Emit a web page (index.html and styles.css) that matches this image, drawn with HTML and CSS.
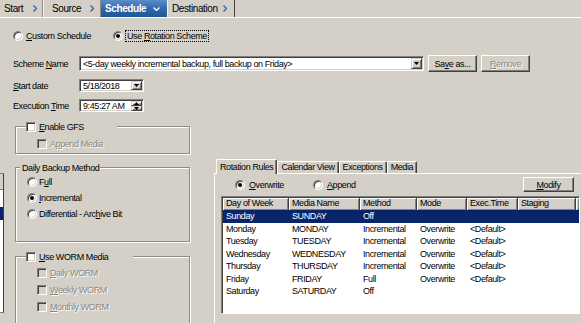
FILE: index.html
```html
<!DOCTYPE html>
<html lang="en">
<head>
    <meta charset="UTF-8">
    <title>Backup Job - Schedule</title>
    <link rel="stylesheet" href="styles.css">
</head>
<body>
<div class="wizard">
    <nav class="steps">
        <div class="step step-start">Start <svg class="chev" viewBox="0 0 4 7"><polyline points="0.5,0.5 3.5,3.5 0.5,6.5"/></svg></div>
        <div class="step step-source">Source <svg class="chev" viewBox="0 0 4 7"><polyline points="0.5,0.5 3.5,3.5 0.5,6.5"/></svg></div>
        <div class="step step-schedule active">Schedule <svg class="chev-down" viewBox="0 0 7 4"><polyline points="0.5,0.5 3.5,3.5 6.5,0.5"/></svg></div>
        <div class="step step-dest">Destination <svg class="chev" viewBox="0 0 4 7"><polyline points="0.5,0.5 3.5,3.5 0.5,6.5"/></svg></div>
    </nav>

    <div class="page">
        <div class="scheme-type">
            <div class="option type-custom"><span class="radio"></span><span><u>C</u>ustom Schedule</span></div>
            <div class="option"><span class="radio on"></span><span class="focus">Use <u>R</u>otation Scheme</span></div>
        </div>

        <div class="form-row scheme-row">
            <span class="form-label">Scheme <u>N</u>ame</span>
            <div class="field combo">
                <span class="field-text">&lt;5-day weekly incremental backup, full backup on Friday&gt;</span>
                <span class="drop-btn"><svg viewBox="0 0 5 3"><polygon points="0,0 5,0 2.5,3"/></svg></span>
            </div>
            <button class="btn">Sa<u>v</u>e as...</button>
            <button class="btn" disabled><u>R</u>emove</button>
        </div>

        <div class="form-row">
            <span class="form-label"><u>S</u>tart date</span>
            <div class="field small">
                <span class="field-text">5/18/2018</span>
                <span class="drop-btn"><svg viewBox="0 0 5 3"><polygon points="0,0 5,0 2.5,3"/></svg></span>
            </div>
        </div>

        <div class="form-row">
            <span class="form-label">Execution <u>T</u>ime</span>
            <div class="field small">
                <span class="field-text">9:45:27 AM</span>
                <span class="spin">
                    <span class="spin-btn"><svg viewBox="0 0 5 3"><polygon points="0,3 5,3 2.5,0"/></svg></span>
                    <span class="spin-btn"><svg viewBox="0 0 5 3"><polygon points="0,0 5,0 2.5,3"/></svg></span>
                </span>
            </div>
        </div>

        <div class="lower">
            <div class="side-list">
                <div class="side-head"></div>
                <div class="side-row"></div>
            </div>

            <div class="options">
                <div class="group">
                    <div class="group-title title-gfs"><span class="check"></span><span><u>E</u>nable GFS</span></div>
                    <div class="group-body gfs-body">
                        <div class="option disabled"><span class="check"></span><span>A<u>p</u>pend Media</span></div>
                    </div>
                </div>

                <div class="group daily">
                    <div class="group-title title-daily">Daily Backup Method</div>
                    <div class="group-body daily-body">
                        <div class="option"><span class="radio"></span><span>F<u>u</u>ll</span></div>
                        <div class="option"><span class="radio on"></span><span><u>I</u>ncremental</span></div>
                        <div class="option"><span class="radio"></span><span>Differential - Arc<u>h</u>ive Bit</span></div>
                    </div>
                </div>

                <div class="group worm">
                    <div class="group-title title-worm"><span class="check"></span><span><u>U</u>se WORM Media</span></div>
                    <div class="group-body worm-body">
                        <div class="option disabled"><span class="check"></span><span><u>D</u>aily WORM</span></div>
                        <div class="option disabled"><span class="check"></span><span><u>W</u>eekly WORM</span></div>
                        <div class="option disabled"><span class="check"></span><span><u>M</u>onthly WORM</span></div>
                    </div>
                </div>
            </div>

            <div class="rules">
                <div class="tabs">
                    <div class="tab active">Rotation Rules</div>
                    <div class="tab">Calendar View</div>
                    <div class="tab">Exceptions</div>
                    <div class="tab">Media</div>
                </div>
                <div class="tab-panel">
                    <div class="panel-bar">
                        <div class="option choice"><span class="radio on"></span><span><u>O</u>verwrite</span></div>
                        <div class="option"><span class="radio"></span><span><u>A</u>ppend</span></div>
                        <button class="btn modify"><u>M</u>odify</button>
                    </div>
                    <div class="list">
                        <div class="list-head">
                            <span>Day of Week</span>
                            <span>Media Name</span>
                            <span>Method</span>
                            <span>Mode</span>
                            <span>Exec.Time</span>
                            <span>Staging</span>
                            <span></span>
                        </div>
                        <div class="list-row selected"><span>Sunday</span><span>SUNDAY</span><span>Off</span><span></span><span></span><span></span></div>
                        <div class="list-row"><span>Monday</span><span>MONDAY</span><span>Incremental</span><span>Overwrite</span><span>&lt;Default&gt;</span><span></span></div>
                        <div class="list-row"><span>Tuesday</span><span>TUESDAY</span><span>Incremental</span><span>Overwrite</span><span>&lt;Default&gt;</span><span></span></div>
                        <div class="list-row"><span>Wednesday</span><span>WEDNESDAY</span><span>Incremental</span><span>Overwrite</span><span>&lt;Default&gt;</span><span></span></div>
                        <div class="list-row"><span>Thursday</span><span>THURSDAY</span><span>Incremental</span><span>Overwrite</span><span>&lt;Default&gt;</span><span></span></div>
                        <div class="list-row"><span>Friday</span><span>FRIDAY</span><span>Full</span><span>Overwrite</span><span>&lt;Default&gt;</span><span></span></div>
                        <div class="list-row"><span>Saturday</span><span>SATURDAY</span><span>Off</span><span></span><span></span><span></span></div>
                    </div>
                </div>
            </div>
        </div>
    </div>
</div>
</body>
</html>
```

FILE: styles.css
```css
* {
    margin: 0;
    padding: 0;
    box-sizing: border-box;
}

body {
    background: #d4d0c8;
    font-family: "Liberation Sans", Arial, sans-serif;
    font-size: 9px;
    letter-spacing: -0.4px;
    color: #000;
    overflow: hidden;
}

.wizard {
    width: 581px;
    height: 323px;
    overflow: hidden;
}

/* wizard step bar */
.steps {
    display: flex;
    height: 18px;
    border-bottom: 1px solid #fff;
}

.step {
    display: flex;
    align-items: center;
    justify-content: space-between;
    font-size: 10px;
    border-right: 1px solid #8e8b84;
    box-shadow: inset 1px 0 #f4f3f0;
}

.step-start { width: 43px; padding: 0 5px 0 4px; box-shadow: none; }
.step-source { width: 58px; padding: 0 6px 0 9px; }
.step-schedule { width: 66px; padding: 0 7px 0 4px; }
.step-dest { width: 68px; padding: 0 7px 0 5px; border-right-color: #404040; }

.step.active {
    background: linear-gradient(#5b8dcc, #2d67aa 55%, #1e5797);
    color: #fff;
    font-weight: bold;
    border-right: none;
    box-shadow: none;
}

.chev {
    width: 4px;
    height: 7px;
    fill: none;
    stroke: #35659d;
    stroke-width: 1.3;
}

.chev-down {
    width: 7px;
    height: 4px;
    fill: none;
    stroke: #fff;
    stroke-width: 1.3;
}

.page {
    padding-left: 13px;
}

/* common controls */
.option {
    display: flex;
    align-items: center;
    gap: 3px;
    height: 10px;
    white-space: nowrap;
}

.radio {
    flex: none;
    display: flex;
    align-items: center;
    justify-content: center;
    width: 10px;
    height: 10px;
    border-radius: 50%;
    background: #fff;
    border: 1px solid;
    border-color: #808080 #fff #fff #808080;
    box-shadow: inset 1px 1px #404040, inset -1px -1px #d4d0c8;
}

.radio.on::after {
    content: "";
    width: 4px;
    height: 4px;
    border-radius: 50%;
    background: #000;
}

.check {
    flex: none;
    width: 10px;
    height: 10px;
    background: #fff;
    border: 1px solid;
    border-color: #808080 #fff #fff #808080;
    box-shadow: inset 1px 1px #404040, inset -1px -1px #d4d0c8;
}

.disabled {
    color: #8a8780;
    text-shadow: 1px 1px #fff;
}

.disabled .check {
    background: #d4d0c8;
}

.btn {
    font: inherit;
    letter-spacing: inherit;
    color: #000;
    width: 49px;
    height: 17px;
    background: #d4d0c8;
    border: 1px solid;
    border-color: #fff #404040 #404040 #fff;
    box-shadow: inset -1px -1px #808080;
}

.btn:disabled {
    color: #8a8780;
    text-shadow: 1px 1px #fff;
}

.field {
    display: flex;
    align-items: stretch;
    background: #fff;
    border: 1px solid;
    border-color: #808080 #fff #fff #808080;
    box-shadow: inset 1px 1px #404040, inset -1px -1px #d4d0c8;
    padding: 1px 1px 1px 3px;
}

.field-text {
    display: flex;
    align-items: center;
    white-space: nowrap;
}

.drop-btn,
.spin-btn {
    display: flex;
    align-items: center;
    justify-content: center;
    background: #d4d0c8;
    border: 1px solid;
    border-color: #d4d0c8 #404040 #404040 #d4d0c8;
    box-shadow: inset 1px 1px #fff, inset -1px -1px #808080;
}

.drop-btn {
    margin-left: auto;
    width: 11px;
}

.drop-btn svg,
.spin-btn svg {
    width: 5px;
    height: 3px;
}

.spin {
    margin-left: auto;
    width: 11px;
    display: flex;
    flex-direction: column;
}

.spin-btn {
    flex: 1;
}

/* top form */
.scheme-type {
    display: flex;
    margin-top: 12px;
    height: 11px;
    align-items: center;
}

.type-custom {
    width: 100px;
}

.focus {
    outline: 1px dotted #000;
    padding: 0 1px;
    line-height: 10px;
}

.form-row {
    display: flex;
    align-items: center;
    margin-top: 7px;
}

.scheme-row {
    margin-top: 14px;
    height: 17px;
}

.form-label {
    width: 66px;
    white-space: nowrap;
}

.combo {
    width: 345px;
    height: 15px;
    margin-right: 4px;
}

.scheme-row .btn + .btn {
    margin-left: 4px;
}

.small {
    width: 65px;
    height: 13px;
}

/* lower area */
.lower {
    display: flex;
    align-items: flex-start;
    margin: 8px 0 0 -13px;
}

.side-list {
    width: 4px;
    height: 140px;
    margin-top: 53px;
    background: #fff;
    border: 1px solid #808080;
    border-left: none;
    border-right-color: #404040;
}

.side-head {
    height: 16px;
    background: #d4d0c8;
    border-bottom: 1px solid #808080;
}

.side-row {
    height: 13px;
    margin-top: 17px;
    background: #0a246a;
}

.options {
    width: 179px;
    margin-left: 11px;
}

.group {
    margin-top: 6px;
    border: 1px solid #8e8b84;
    box-shadow: 1px 1px #fff, inset 1px 1px #fff;
}

.group.daily { margin-top: 13px; }
.group.worm { margin-top: 14px; height: 80px; }

.group-title {
    display: flex;
    align-items: center;
    gap: 3px;
    height: 11px;
    margin-top: -6px;
    background: #d4d0c8;
    white-space: nowrap;
}

.title-gfs { margin-left: 10px; width: 91px; }
.title-daily { margin-left: 4px; width: 80px; padding-left: 2px; }
.title-worm { margin-left: 10px; width: 107px; }

.gfs-body {
    padding: 7px 0 4px 21px;
}

.daily-body {
    padding: 4px 0 22px 11px;
    display: flex;
    flex-direction: column;
    gap: 6px;
}

.daily-body .option { gap: 2px; }

.worm-body {
    padding: 6px 0 0 21px;
    display: flex;
    flex-direction: column;
    gap: 7px;
}

/* rotation rules tab control */
.rules {
    width: 369px;
    margin: 39px 0 0 24px;
}

.tabs {
    display: flex;
    align-items: flex-end;
    height: 14px;
    padding-left: 2px;
}

.tab {
    height: 12px;
    padding: 0 3px;
    line-height: 11px;
    white-space: nowrap;
    border: 1px solid;
    border-color: #fff #404040 transparent #fff;
    border-bottom: none;
    border-radius: 2px 2px 0 0;
    box-shadow: inset -1px 0 #808080;
}

.tab.active {
    height: 15px;
    line-height: 14px;
    margin-bottom: -1px;
    position: relative;
    background: #d4d0c8;
    padding: 0 3px;
}

.tab-panel {
    height: 160px;
    border-top: 1px solid #fff;
    border-left: 1px solid #fff;
    padding: 3px 7px 0 6px;
}

.panel-bar {
    display: flex;
    align-items: center;
    height: 15px;
}

.panel-bar .option {
    gap: 4px;
}

.panel-bar .choice {
    margin-left: 14px;
    width: 78px;
}

.btn.modify {
    margin-left: auto;
    width: 51px;
    height: 15px;
}

.list {
    margin: 4px -6px 0 0;
    height: 118px;
    background: #fff;
    border: 1px solid;
    border-color: #808080 #fff #fff #808080;
    box-shadow: inset 1px 1px #404040;
    padding: 1px 0 0 1px;
}

.list-head,
.list-row {
    display: grid;
    grid-template-columns: 66px 71px 57px 50px 51px 58px 1fr;
    white-space: nowrap;
}

.list-head span {
    height: 12px;
    line-height: 11px;
    padding-left: 3px;
    background: #d4d0c8;
    border-right: 1px solid #404040;
    box-shadow: inset 1px 1px #fff, inset -1px -1px #808080;
}

.list-head span:last-child {
    border-right: none;
}

.list-row {
    height: 12.5px;
    line-height: 12.5px;
}

.list-row span {
    padding-left: 3px;
}

.list-row.selected {
    background: #0a246a;
    color: #fff;
}
```
